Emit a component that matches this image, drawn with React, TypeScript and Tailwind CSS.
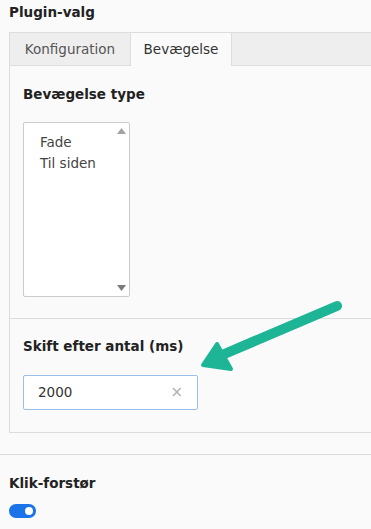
export default function App() {
  return (
    <div className="relative w-[371px] h-[529px] overflow-hidden bg-[#fafafa] text-[#333] font-['DejaVu_Sans','Verdana',sans-serif] text-[13.5px]">
      {/* Header */}
      <div className="pl-[9px] pt-[3px] h-[32px]">
        <h2 className="font-bold leading-[18px] text-[#222]">Plugin-valg</h2>
      </div>

      {/* Tabs */}
      <div className="ml-[9px] flex h-[34px] bg-[#eeeeee] border-t border-l border-b border-[#dddddd]">
        <div className="w-[120px] flex items-center justify-center text-[#555]">Konfiguration</div>
        <div className="w-[102px] -mb-px -mt-px flex items-center justify-center bg-[#fafafa] border-t border-l border-r border-[#dddddd] text-[#333]">
          Bevægelse
        </div>
      </div>

      {/* Panel */}
      <div className="ml-[9px] border-l border-b border-[#dddddd] bg-[#fafafa]">
        <div className="px-[13px] pt-[19px] h-[253px] border-b border-[#dddddd]">
          <div className="font-bold leading-[18px] text-[#222]">Bevægelse type</div>
          <div className="mt-[19px] w-[107px] h-[175px] bg-white border border-[#cccccc] rounded-[2px] flex">
            <div className="flex-1 pt-[9px] pl-[16px] leading-[21px] text-[#444]">
              <div>Fade</div>
              <div>Til siden</div>
            </div>
            <div className="w-[16px] flex flex-col items-center justify-between py-[5px]">
              <svg width="9" height="6" viewBox="0 0 9 6"><path d="M0 6 L4.5 0 L9 6 Z" fill="#a3a3a3" /></svg>
              <svg width="9" height="6" viewBox="0 0 9 6"><path d="M0 0 L4.5 6 L9 0 Z" fill="#7a7a7a" /></svg>
            </div>
          </div>
        </div>
        <div className="px-[13px] pt-[18px] h-[113px]">
          <div className="font-bold leading-[18px] text-[#222]">Skift efter antal (ms)</div>
          <div className="mt-[20px] w-[175px] h-[35px] bg-white border border-[#99c0ea] rounded-[2px] flex items-center justify-between pl-[14px] pr-[14px]">
            <span className="text-[#333]">2000</span>
            <span className="text-[#b0b0b0] text-[15px] leading-none">×</span>
          </div>
        </div>
      </div>

      {/* Divider */}
      <div className="mt-[21px] border-t border-[#dddddd]" />

      {/* Klik-forstør */}
      <div className="pl-[9px] pt-[19px]">
        <div className="font-bold leading-[18px] text-[#222]">Klik-forstør</div>
        <div className="mt-[12px] w-[27px] h-[14px] rounded-full bg-[#1a73e8] flex items-center justify-end pr-[3px]">
          <div className="w-[8px] h-[8px] rounded-full bg-white" />
        </div>
      </div>

      {/* Annotation arrow */}
      <svg className="absolute left-0 top-0 pointer-events-none" width="371" height="529" viewBox="0 0 371 529">
        <line x1="337" y1="306" x2="222" y2="355" stroke="#1db596" strokeWidth="10" strokeLinecap="round" />
        <path d="M203 365 L217 344 L231 369 Z" fill="#1db596" stroke="#1db596" strokeWidth="4" strokeLinejoin="round" />
      </svg>
    </div>
  );
}
